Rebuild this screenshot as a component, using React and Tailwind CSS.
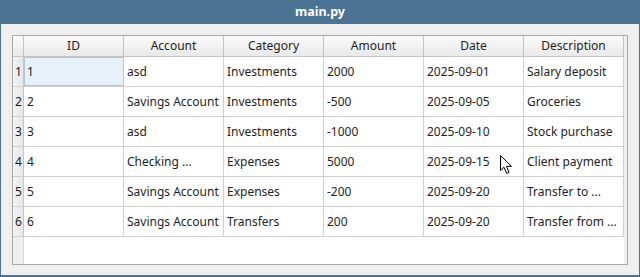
import React from 'react';

const columns = ['ID', 'Account', 'Category', 'Amount', 'Date', 'Description'];

const rows = [
  ['1', 'asd', 'Investments', '2000', '2025-09-01', 'Salary deposit'],
  ['2', 'Savings Account', 'Investments', '-500', '2025-09-05', 'Groceries'],
  ['3', 'asd', 'Investments', '-1000', '2025-09-10', 'Stock purchase'],
  ['4', 'Checking ...', 'Expenses', '5000', '2025-09-15', 'Client payment'],
  ['5', 'Savings Account', 'Expenses', '-200', '2025-09-20', 'Transfer to ...'],
  ['6', 'Savings Account', 'Transfers', '200', '2025-09-20', 'Transfer from ...'],
];

const App = () => {
  return (
    <div
      className="relative w-[640px] h-[277px] bg-[#4a7394] flex flex-col text-[#1e1e1e]"
      style={{ fontFamily: '"Noto Sans", "Open Sans", sans-serif' }}
    >
      {/* Title bar */}
      <div className="h-[24px] flex items-center justify-center text-white font-bold text-[12.5px]">
        main.py
      </div>

      {/* Window body */}
      <div className="flex-1 mx-[1px] mb-[2px] bg-[#efefef] pt-[11px] px-[11px]">
        <div className="w-[616px] h-[230px] border border-[#a8a8a8] bg-[#efefef] flex pr-[3px]">
          <div className="w-[611px] flex flex-col bg-white text-[12px]">
            {/* Header */}
            <div className="h-[21px] flex border-b border-[#c4c4c4] bg-gradient-to-b from-[#fafafa] to-[#e9e9e9]">
              <div className="w-[11px] border-r border-[#c4c4c4]"></div>
              {columns.map(col => (
                <div
                  key={col}
                  className="w-[100px] border-r border-[#c4c4c4] flex items-center justify-center leading-none"
                >
                  {col}
                </div>
              ))}
            </div>

            {/* Rows */}
            {rows.map((row, i) => (
              <div key={i} className="h-[30px] flex border-b border-[#cfcfcf]">
                <div className="w-[11px] border-r border-[#c4c4c4] bg-gradient-to-r from-[#f4f4f4] to-[#e6e6e6] flex items-center pl-[2px]">
                  {i + 1}
                </div>
                {row.map((cell, j) => (
                  <div
                    key={j}
                    className={`w-[100px] border-r border-[#cfcfcf] flex items-center pl-[3px] whitespace-nowrap overflow-hidden ${
                      i === 0 && j === 0 ? 'bg-[#e7f1fa] outline outline-1 -outline-offset-1 outline-[#b0c8dc]' : ''
                    }`}
                  >
                    {cell}
                  </div>
                ))}
              </div>
            ))}

            {/* Empty area */}
            <div className="flex-1 flex">
              <div className="w-[11px] bg-[#efefef] border-r border-[#d8d8d8]"></div>
              <div className="flex-1"></div>
            </div>
          </div>
        </div>
      </div>

      {/* Mouse cursor */}
      <svg
        className="absolute left-[500px] top-[155px]"
        width="13"
        height="20"
        viewBox="0 0 13 20"
      >
        <path
          d="M0.5 0.5 L0.5 15.5 L4 12.2 L6.6 18.3 L9 17.3 L6.5 11.4 L11.5 11.4 Z"
          fill="white"
          stroke="black"
          strokeWidth="1"
          strokeLinejoin="miter"
        />
      </svg>
    </div>
  );
};

export default App;
